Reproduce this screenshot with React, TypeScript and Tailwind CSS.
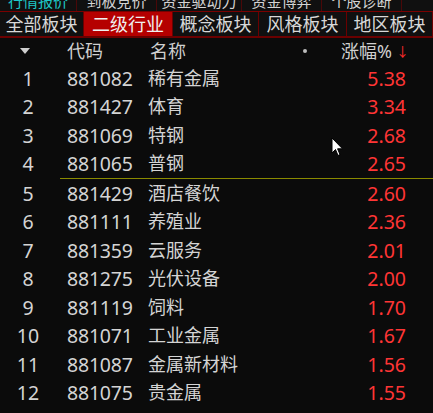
import React from "react";

const rows = [
  ["1", "881082", "稀有金属", "5.38"],
  ["2", "881427", "体育", "3.34"],
  ["3", "881069", "特钢", "2.68"],
  ["4", "881065", "普钢", "2.65"],
  ["5", "881429", "酒店餐饮", "2.60"],
  ["6", "881111", "养殖业", "2.36"],
  ["7", "881359", "云服务", "2.01"],
  ["8", "881275", "光伏设备", "2.00"],
  ["9", "881119", "饲料", "1.70"],
  ["10", "881071", "工业金属", "1.67"],
  ["11", "881087", "金属新材料", "1.56"],
  ["12", "881075", "贵金属", "1.55"],
];

const topTabs = [
  { t: "行情报价", w: 77, active: true },
  { t: "到板竞价", w: 80 },
  { t: "资金驱动力", w: 85 },
  { t: "资金博弈", w: 80 },
  { t: "个股诊断", w: 80 },
];

const secTabs = [
  { t: "全部板块", w: 84 },
  { t: "二级行业", w: 89, active: true },
  { t: "概念板块", w: 86 },
  { t: "风格板块", w: 88 },
  { t: "地区板块", w: 86 },
];

export default function App() {
  const font = { fontFamily: '"Noto Sans", "Noto Sans CJK SC", sans-serif' };
  return (
    <div
      className="relative w-[433px] h-[413px] overflow-hidden bg-[#0b0b0b] text-[#d4d4d4]"
      style={font}
    >
      {/* top strip (cut) */}
      <div className="flex h-[12px] overflow-hidden bg-[#101010] border-b border-[#7a0000]">
        {topTabs.map((x, i) => (
          <div
            key={i}
            className={`shrink-0 flex justify-center items-start overflow-hidden border-r border-[#4a0808] ${x.active ? "text-[#1fc8c8]" : "text-[#d4d4d4]"}`}
            style={{ width: x.w }}
          >
            <span className="shrink-0 text-[15px] leading-[15px] mt-[-6px] whitespace-nowrap">{x.t}</span>
          </div>
        ))}
      </div>
      {/* secondary tabs */}
      <div className="flex h-[26px] bg-[#101010] border-b-2 border-[#6a0000]">
        {secTabs.map((x, i) => (
          <div
            key={i}
            className={`shrink-0 flex items-center justify-center border-r border-[#6a0000] text-[18px] leading-none ${x.active ? "bg-[#b50000] text-[#f0f0f0]" : "text-[#d8d8d8]"}`}
            style={{ width: x.w }}
          >
            {x.t}
          </div>
        ))}
      </div>
      {/* header */}
      <div className="flex items-center h-[26px] text-[18px] text-[#cfcfcf]">
        <div className="w-[56px] flex justify-center">
          <div className="w-0 h-0 border-l-[5px] border-r-[5px] border-t-[6px] border-l-transparent border-r-transparent border-t-[#cfcfcf] ml-[-6px]" />
        </div>
        <div className="ml-[11px] w-[83px]">代码</div>
        <div className="flex-1">名称</div>
        <div className="w-[4px] h-[4px] rounded-full bg-[#bdbdbd] mr-[34px]" />
        <div className="flex items-center pr-[24px]">
          <span>涨幅%</span>
          <span className="text-[#ff2a2a] text-[13px] ml-[4px] mt-[2px]">↓</span>
        </div>
      </div>
      {/* rows */}
      <div className="flex flex-col">
        {rows.map((r, i) => (
          <React.Fragment key={i}>
            <div className="flex items-center h-[28.5px]">
              <div className="w-[56px] text-center text-[19.5px]">{r[0]}</div>
              <div className="ml-[11px] w-[81px] text-[19.5px] tracking-[-0.2px]">{r[1]}</div>
              <div className="flex-1 text-[18px]">{r[2]}</div>
              <div className="pr-[27px] text-right text-[19.5px] text-[#ff3535]">{r[3]}</div>
            </div>
            {i === 3 && <div className="h-px ml-[60px] bg-[#8a8a00]" />}
          </React.Fragment>
        ))}
      </div>
      {/* mouse cursor */}
      <svg className="absolute left-[331px] top-[137px]" width="14" height="21" viewBox="0 0 14 21">
        <path d="M1 1 L1 16 L4.5 12.5 L7 18.5 L9 17.6 L6.6 11.8 L11.5 11.8 Z" fill="#ffffff" stroke="#000" strokeWidth="1" />
      </svg>
    </div>
  );
}
